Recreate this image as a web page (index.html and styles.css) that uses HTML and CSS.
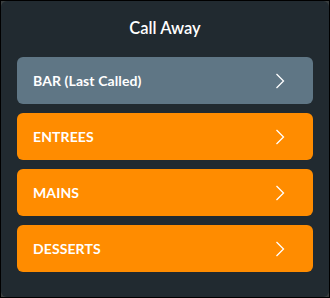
FILE: index.html
```html
<!DOCTYPE html>
<html>
<head>
<meta charset="utf-8">
<link rel="stylesheet" href="styles.css">
</head>
<body>
<div class="frame">
  <div class="panel">
    <h1 class="title">Call Away</h1>
    <div class="list">
      <div class="item item-last">
        <span class="label">BAR (Last Called)</span>
        <svg class="chev" width="10" height="16" viewBox="0 0 10 16"><path d="M1.5 1 L8.5 8 L1.5 15" fill="none" stroke="#fff" stroke-width="1.3"/></svg>
      </div>
      <div class="item">
        <span class="label">ENTREES</span>
        <svg class="chev" width="10" height="16" viewBox="0 0 10 16"><path d="M1.5 1 L8.5 8 L1.5 15" fill="none" stroke="#fff" stroke-width="1.3"/></svg>
      </div>
      <div class="item">
        <span class="label">MAINS</span>
        <svg class="chev" width="10" height="16" viewBox="0 0 10 16"><path d="M1.5 1 L8.5 8 L1.5 15" fill="none" stroke="#fff" stroke-width="1.3"/></svg>
      </div>
      <div class="item">
        <span class="label">DESSERTS</span>
        <svg class="chev" width="10" height="16" viewBox="0 0 10 16"><path d="M1.5 1 L8.5 8 L1.5 15" fill="none" stroke="#fff" stroke-width="1.3"/></svg>
      </div>
    </div>
  </div>
</div>
</body>
</html>
```
FILE: styles.css
```css
html, body {
  margin: 0;
  padding: 0;
  background: #000;
}
.frame {
  width: 330px;
  height: 298px;
  box-sizing: border-box;
  border: 1px solid #000;
  background: #3a3f40;
}
.panel {
  height: 100%;
  background: #212a30;
  border-radius: 6px;
  box-sizing: border-box;
  padding: 17px 16px 0 16px;
  font-family: Lato, "Open Sans", sans-serif;
  color: #fff;
}
.title {
  margin: 0;
  text-align: center;
  font-size: 16.5px;
  font-weight: 600;
  line-height: 20px;
  height: 20px;
}
.list {
  margin-top: 19px;
  display: flex;
  flex-direction: column;
  gap: 9px;
}
.item {
  height: 47px;
  border-radius: 6px;
  background: #ff8c00;
  display: flex;
  align-items: center;
  justify-content: space-between;
  padding: 0 28px 0 16px;
}
.item-last {
  background: #5f7685;
}
.label {
  font-size: 14px;
  font-weight: 700;
  letter-spacing: 0.1px;
}
.chev {
  display: block;
}
```
